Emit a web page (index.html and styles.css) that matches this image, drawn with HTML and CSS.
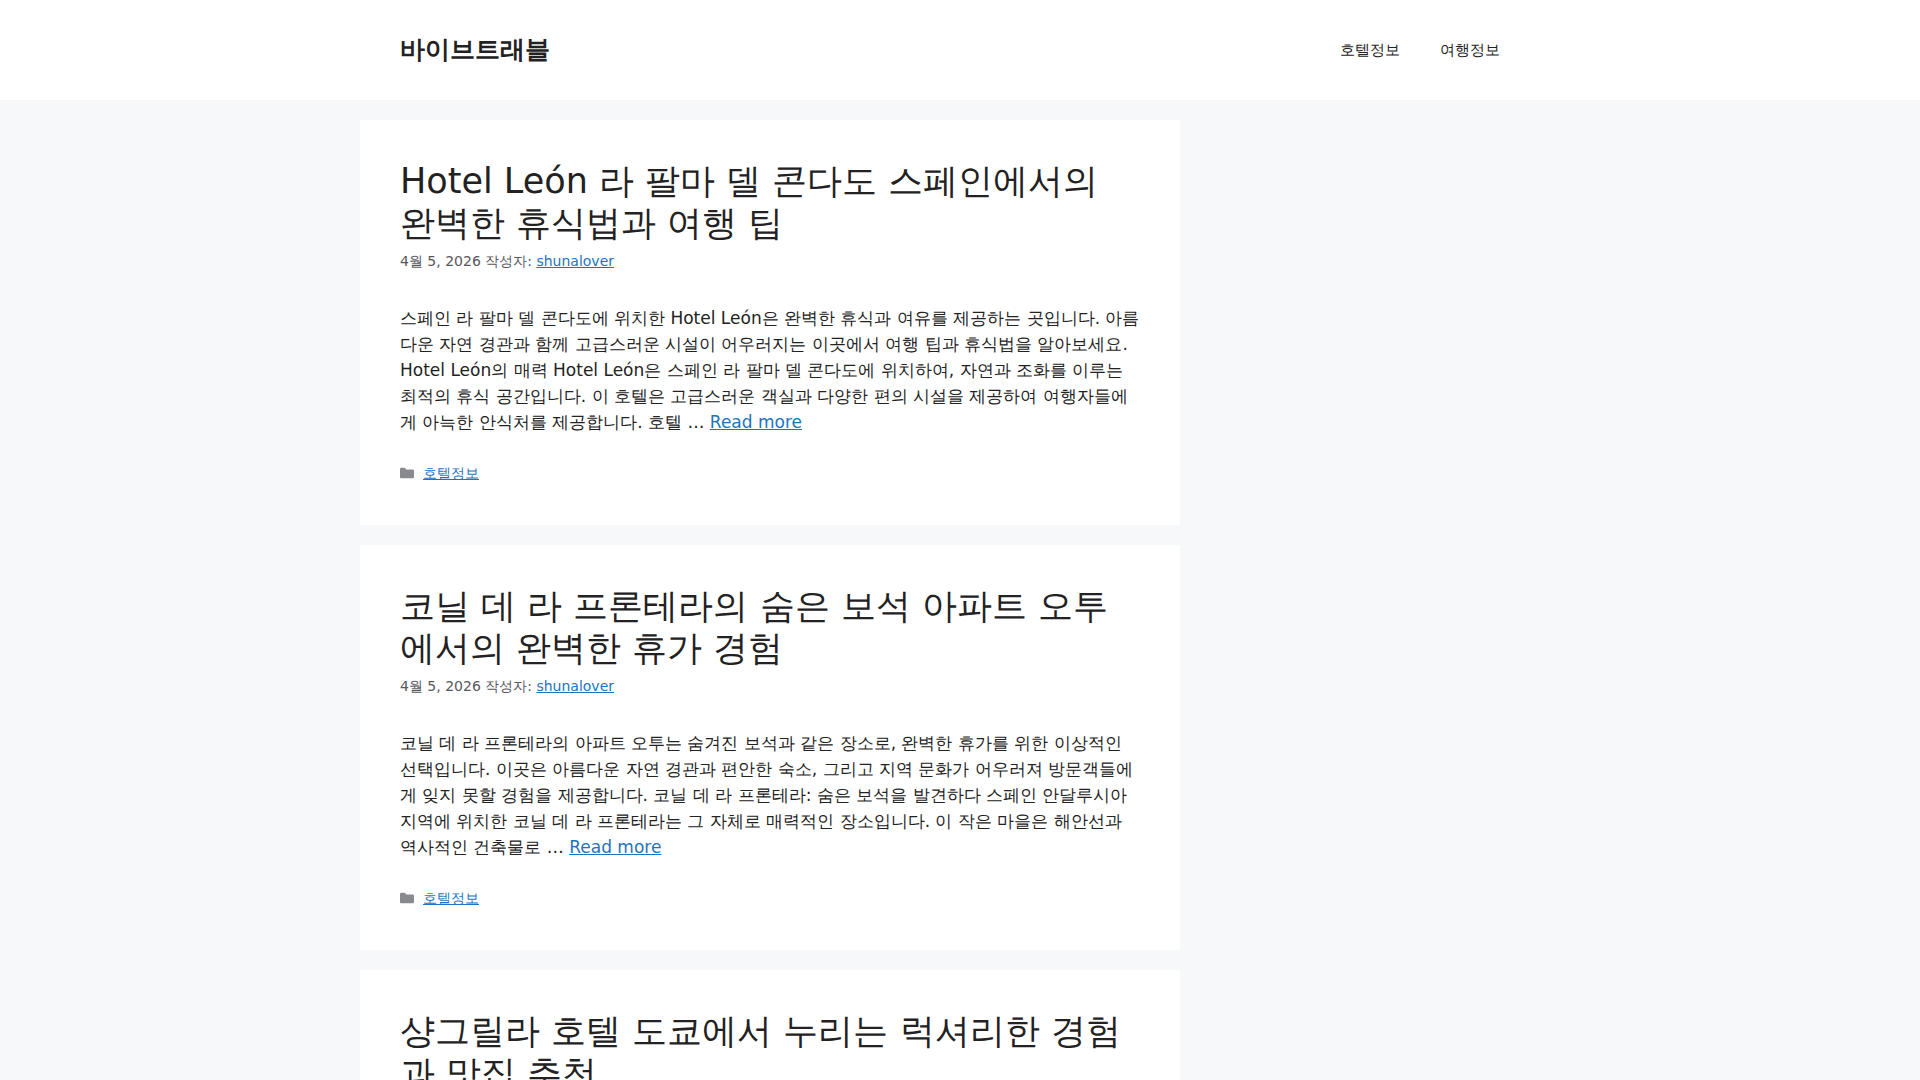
FILE: index.html
```html
<!DOCTYPE html>
<html lang="ko">
<head>
<meta charset="utf-8">
<meta name="viewport" content="width=device-width, initial-scale=1">
<title>바이브트래블</title>
<link rel="stylesheet" href="styles.css">
</head>
<body>
<svg class="sprite" aria-hidden="true">
  <symbol id="folder" viewBox="0 0 512 512">
    <path d="M0 112c0-26.5 21.5-48 48-48h110.014a48 48 0 0 1 43.592 27.907l12.349 26.791A16 16 0 0 0 228.486 128H464c26.5 0 48 21.5 48 48v224c0 26.5-21.5 48-48 48H48c-26.5 0-48-21.5-48-48V112z"/>
  </symbol>
</svg>
<header class="site-header">
  <div class="header-inner">
    <p class="site-title"><a href="#">바이브트래블</a></p>
    <nav class="main-nav">
      <a href="#">호텔정보</a>
      <a href="#">여행정보</a>
    </nav>
  </div>
</header>
<div class="site-content">
  <main class="posts">
    <article class="post">
      <h2 class="entry-title"><a href="#">Hotel León 라 팔마 델 콘다도 스페인에서의 완벽한 휴식법과 여행 팁</a></h2>
      <div class="entry-meta">4월 5, 2026 작성자: <a href="#">shunalover</a></div>
      <p class="entry-summary">스페인 라 팔마 델 콘다도에 위치한 Hotel León은 완벽한 휴식과 여유를 제공하는 곳입니다. 아름다운 자연 경관과 함께 고급스러운 시설이 어우러지는 이곳에서 여행 팁과 휴식법을 알아보세요. Hotel León의 매력 Hotel León은 스페인 라 팔마 델 콘다도에 위치하여, 자연과 조화를 이루는 최적의 휴식 공간입니다. 이 호텔은 고급스러운 객실과 다양한 편의 시설을 제공하여 여행자들에게 아늑한 안식처를 제공합니다. 호텔 … <a href="#">Read more</a></p>
      <footer class="entry-footer"><svg class="icon" aria-hidden="true"><use href="#folder"/></svg><a href="#">호텔정보</a></footer>
    </article>
    <article class="post">
      <h2 class="entry-title"><a href="#">코닐 데 라 프론테라의 숨은 보석 아파트 오투에서의 완벽한 휴가 경험</a></h2>
      <div class="entry-meta">4월 5, 2026 작성자: <a href="#">shunalover</a></div>
      <p class="entry-summary">코닐 데 라 프론테라의 아파트 오투는 숨겨진 보석과 같은 장소로, 완벽한 휴가를 위한 이상적인 선택입니다. 이곳은 아름다운 자연 경관과 편안한 숙소, 그리고 지역 문화가 어우러져 방문객들에게 잊지 못할 경험을 제공합니다. 코닐 데 라 프론테라: 숨은 보석을 발견하다 스페인 안달루시아 지역에 위치한 코닐 데 라 프론테라는 그 자체로 매력적인 장소입니다. 이 작은 마을은 해안선과 역사적인 건축물로 … <a href="#">Read more</a></p>
      <footer class="entry-footer"><svg class="icon" aria-hidden="true"><use href="#folder"/></svg><a href="#">호텔정보</a></footer>
    </article>
    <article class="post">
      <h2 class="entry-title"><a href="#">샹그릴라 호텔 도쿄에서 누리는 럭셔리한 경험과 맛집 추천</a></h2>
      <div class="entry-meta">4월 5, 2026 작성자: <a href="#">shunalover</a></div>
    </article>
  </main>
</div>
</body>
</html>
```

FILE: styles.css
```css
* {
  box-sizing: border-box;
}

body {
  margin: 0;
  background: #f7f8f9;
  color: #222222;
  font-family: "DejaVu Sans", sans-serif;
  font-size: 17px;
  line-height: 26px;
}

h2,
p {
  margin: 0;
}

a {
  color: #1e73be;
}

.sprite {
  display: none;
}

.site-header {
  background: #ffffff;
}

.header-inner {
  display: flex;
  align-items: center;
  justify-content: space-between;
  max-width: 1200px;
  min-height: 100px;
  margin: 0 auto;
  padding: 20px 40px;
}

.site-title {
  font-size: 25px;
  font-weight: bold;
  line-height: 30px;
}

.site-title a,
.main-nav a,
.entry-title a {
  color: #222222;
  text-decoration: none;
}

.main-nav {
  display: flex;
}

.main-nav a {
  padding: 0 20px;
  font-size: 15px;
  line-height: 60px;
}

.site-content {
  display: grid;
  grid-template-columns: 7fr 3fr;
  max-width: 1200px;
  margin: 0 auto;
}

.posts {
  display: flex;
  flex-direction: column;
  gap: 20px;
  margin: 20px 20px 20px 0;
}

.post {
  padding: 40px 40px 41px;
  background: #ffffff;
}

.entry-title {
  font-size: 35px;
  font-weight: normal;
  line-height: 42px;
}

.entry-meta {
  margin-top: 6px;
  color: #575760;
  font-size: 14px;
  line-height: 22px;
}

.entry-summary {
  margin-top: 33px;
}

.entry-footer {
  display: flex;
  align-items: center;
  gap: 9px;
  margin-top: 27px;
  font-size: 14px;
  line-height: 22px;
}

.icon {
  width: 14px;
  height: 14px;
  fill: #898990;
}
```
